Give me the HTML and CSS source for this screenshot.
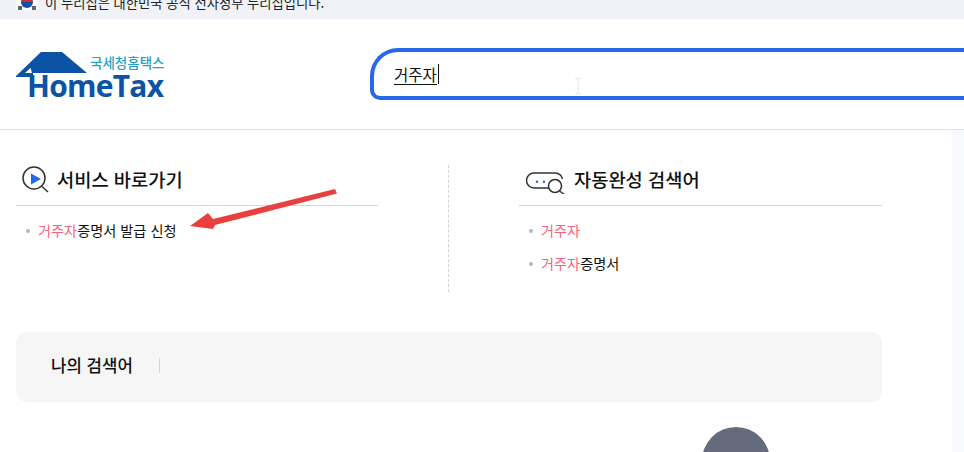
FILE: index.html
```html
<!DOCTYPE html>
<html lang="ko">
<head>
    <meta charset="utf-8">
    <link rel="stylesheet" href="styles.css">
</head>
<body>
    <div class="gov_bar">
        <svg class="flag" width="22" height="15" viewBox="0 0 22 15">
            <rect width="22" height="15" fill="#fff"/>
            <path d="M5 7a6 6 0 0 1 12 0z" fill="#cd2e3a"/>
            <path d="M5 7a6 6 0 0 0 12 0z" fill="#0f4fa8"/>
            <g fill="#666">
                <rect x="2" y="11" width="4" height="4"/>
                <rect x="16" y="11" width="4" height="4"/>
            </g>
        </svg>
        <span>이 누리집은 대한민국 공식 전자정부 누리집입니다.</span>
    </div>

    <header class="top">
        <div class="logo">
            <svg class="roof" width="72" height="27" viewBox="0 0 72 27">
                <path d="M0 24 L25 0 H46 L71 21 H17 V25 H0z" fill="#0d53a5"/>
                <path d="M9 21 L14.500 16 L16 21z" fill="#fff"/>
            </svg>
            <span class="logo_sub">국세청홈택스</span>
            <span class="logo_main">HomeTax</span>
        </div>
        <div class="search_box">
            <span class="search_text">거주자</span><span class="caret"></span>
        </div>
    </header>

    <div class="page">
        <main class="content">
            <div class="columns">
                <section class="col">
                    <h2 class="col_title">
                        <svg width="32" height="30" viewBox="0 0 32 30">
                            <circle cx="14" cy="14" r="11" fill="none" stroke="#333" stroke-width="1.500"/>
                            <path d="M22 22.500 L28 28" stroke="#333" stroke-width="1.500" fill="none"/>
                            <path d="M11 9.500 L21 15 L11 20.500z" fill="#2668e8"/>
                        </svg>
                        서비스 바로가기
                    </h2>
                    <ul class="result_list">
                        <li><em>거주자</em>증명서 발급 신청</li>
                    </ul>
                </section>
                <div class="divider"></div>
                <section class="col wide">
                    <h2 class="col_title second">
                        <svg width="40" height="30" viewBox="0 0 40 30">
                            <g transform="translate(0 8)">
                                <path d="M23 16 H8 A7.500 7.500 0 0 1 8 1 H29 A8 8 0 0 1 36.500 7" fill="none" stroke="#333" stroke-width="1.500"/>
                                <circle cx="29" cy="14" r="6.500" fill="#fff" stroke="#333" stroke-width="1.500"/>
                                <path d="M33.500 19 L38.500 22.500" stroke="#333" stroke-width="1.500"/>
                                <circle cx="11" cy="9.700" r="1.200" fill="#2668e8"/>
                                <circle cx="18" cy="9.700" r="1.200" fill="#2668e8"/>
                            </g>
                        </svg>
                        자동완성 검색어
                    </h2>
                    <ul class="result_list">
                        <li><em>거주자</em></li>
                        <li><em>거주자</em>증명서</li>
                    </ul>
                </section>
            </div>
            <div class="my_search">
                <strong>나의 검색어</strong>
                <span class="my_line"></span>
            </div>
        </main>
        <aside class="side"></aside>
    </div>

    <!-- annotation and pointer drawn over the capture -->
    <svg class="arrow" width="150" height="45" viewBox="0 0 150 45">
        <path d="M0 38 L18 25 L23 31 L145 1 L147 5.500 L25 37 L23 41z" fill="#e8413d"/>
    </svg>
    <svg class="ibeam" width="6" height="16" viewBox="0 0 6 16">
        <path d="M0 .500 H6 M3 .500 V15.500 M0 15.500 H6" stroke="#e6e6e6" fill="none"/>
    </svg>
    <div class="float_clip"><div class="float_btn"></div></div>
</body>
</html>
```

FILE: styles.css
```css
html, body { margin: 0; height: 452px; overflow: hidden; }
body { position: relative; background: #fff; color: #111; font-family: "Noto Sans CJK KR", "Noto Sans", sans-serif; }

.gov_bar { height: 19px; background: #f0f2f8; padding-left: 16px; display: flex; align-items: flex-end; gap: 7px; overflow: hidden; font-size: 13.300px; color: #222; }
.gov_bar .flag { flex: none; margin-bottom: 9px; }
.gov_bar span { line-height: 19px; margin-bottom: 7px; white-space: nowrap; }

.top { height: 110px; border-bottom: 1px solid #e4e4e4; display: flex; align-items: flex-start; }
.logo { position: relative; width: 150px; height: 48px; margin: 33px 0 0 16px; flex: none; }
.roof { position: absolute; left: 0; top: 0; }
.logo_sub { position: absolute; left: 74px; top: 2px; font-size: 13.500px; font-weight: 500; line-height: 16px; color: #25a3c4; white-space: nowrap; }
.logo_main { position: absolute; left: 11px; top: 22px; font-family: "Open Sans", sans-serif; font-weight: 700; font-size: 30px; line-height: 24px; color: #0d53a5; white-space: nowrap; letter-spacing: -0.750px; }

.search_box { margin: 29px 0 0 204px; width: 570px; height: 44px; flex: none; border: 4px solid #2668e8; border-right: 0; border-radius: 28px 0 0 10px; display: flex; align-items: center; padding-left: 20px; font-size: 15.500px; }
.search_text { border-bottom: 1px solid #111; line-height: 20px; }
.caret { width: 1px; height: 20px; background: #111; margin-left: 1px; }

.page { display: flex; height: 322px; }
.content { width: 952px; padding: 35px 0 0 16px; box-sizing: border-box; }
.side { width: 12px; background: #f8f9fd; }

.columns { display: flex; width: 866px; height: 127px; }
.col { width: 362px; flex: none; }
.col.wide { width: 363px; }
.col_title { margin: 0; height: 41px; box-sizing: border-box; padding: 0 0 12px 4px; border-bottom: 1px solid #d4d4d4; display: flex; align-items: center; gap: 5px; font-size: 18.700px; font-weight: 500; line-height: 30px; }
.col_title.second { gap: 8px; padding-left: 7px; }
.divider { width: 0; border-left: 1px dashed #cfd3e0; margin: 0 70px; }

.result_list { list-style: none; margin: 8px 0 0; padding: 0 0 0 10px; font-size: 14.200px; }
.result_list li { height: 33px; line-height: 33px; padding-left: 12px; position: relative; }
.result_list li::before { content: ""; position: absolute; left: 0; top: 15px; width: 4px; height: 4px; border-radius: 50%; background: #b4b8c6; }
.result_list em { font-style: normal; color: #f4647c; }

.my_search { width: 866px; height: 70px; margin-top: 40px; background: #f6f6f6; border-radius: 10px; display: flex; align-items: center; box-sizing: border-box; padding: 0 0 4px 35px; }
.my_search strong { font-size: 16.800px; font-weight: 500; width: 108px; flex: none; }
.my_line { width: 1px; height: 15px; background: #d4d4d4; }

.arrow { position: absolute; left: 190px; top: 188px; }
.ibeam { position: absolute; left: 575px; top: 78px; }
.float_clip { position: absolute; left: 702px; top: 427px; width: 68px; height: 25px; overflow: hidden; }
.float_btn { width: 68px; height: 68px; border-radius: 50%; background: #656b7a; }
```
